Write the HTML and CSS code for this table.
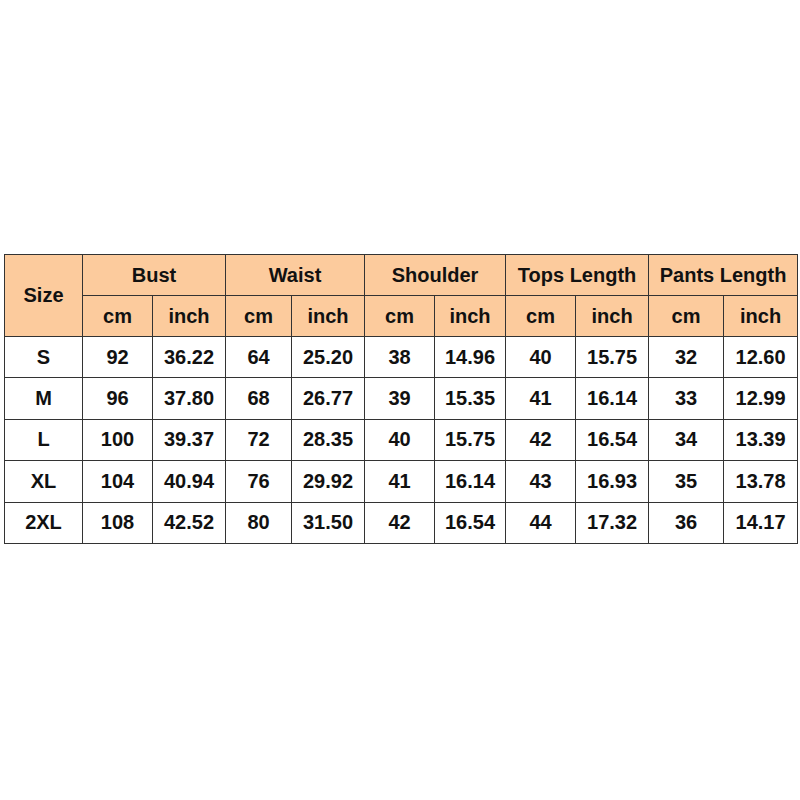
FILE: index.html
```html
<!DOCTYPE html>
<html>
<head>
<meta charset="utf-8">
<link rel="stylesheet" href="styles.css">
</head>
<body>
<div class="wrap">
<table class="sizes">
<colgroup>
<col style="width:78px"><col style="width:70px"><col style="width:73px"><col style="width:66px"><col style="width:73px"><col style="width:70px"><col style="width:71px"><col style="width:70px"><col style="width:73px"><col style="width:75px"><col style="width:74px">
</colgroup>
<thead>
<tr class="h1"><th rowspan="2">Size</th><th colspan="2">Bust</th><th colspan="2">Waist</th><th colspan="2">Shoulder</th><th colspan="2">Tops Length</th><th colspan="2">Pants Length</th></tr>
<tr class="h2"><th>cm</th><th>inch</th><th>cm</th><th>inch</th><th>cm</th><th>inch</th><th>cm</th><th>inch</th><th>cm</th><th>inch</th></tr>
</thead>
<tbody>
<tr><td>S</td><td>92</td><td>36.22</td><td>64</td><td>25.20</td><td>38</td><td>14.96</td><td>40</td><td>15.75</td><td>32</td><td>12.60</td></tr>
<tr><td>M</td><td>96</td><td>37.80</td><td>68</td><td>26.77</td><td>39</td><td>15.35</td><td>41</td><td>16.14</td><td>33</td><td>12.99</td></tr>
<tr><td>L</td><td>100</td><td>39.37</td><td>72</td><td>28.35</td><td>40</td><td>15.75</td><td>42</td><td>16.54</td><td>34</td><td>13.39</td></tr>
<tr><td>XL</td><td>104</td><td>40.94</td><td>76</td><td>29.92</td><td>41</td><td>16.14</td><td>43</td><td>16.93</td><td>35</td><td>13.78</td></tr>
<tr><td>2XL</td><td>108</td><td>42.52</td><td>80</td><td>31.50</td><td>42</td><td>16.54</td><td>44</td><td>17.32</td><td>36</td><td>14.17</td></tr>
</tbody>
</table>
</div>
</body>
</html>
```
FILE: styles.css
```css
html, body { margin: 0; padding: 0; background: #fff; }
.wrap { padding: 254px 0 0 4px; }
.sizes {
  border-collapse: collapse;
  table-layout: fixed;
  width: 793px;
  font-family: "Liberation Sans", Arial, sans-serif;
  font-weight: bold;
  font-size: 20px;
  color: #111;
}
.sizes th, .sizes td {
  border: 1px solid #333;
  text-align: center;
  vertical-align: middle;
  padding: 0;
  height: 40px;
  font-weight: bold;
  white-space: nowrap;
}
.sizes tbody td { height: 40.4px; }
.sizes thead th { background: #fccb9d; }
```
